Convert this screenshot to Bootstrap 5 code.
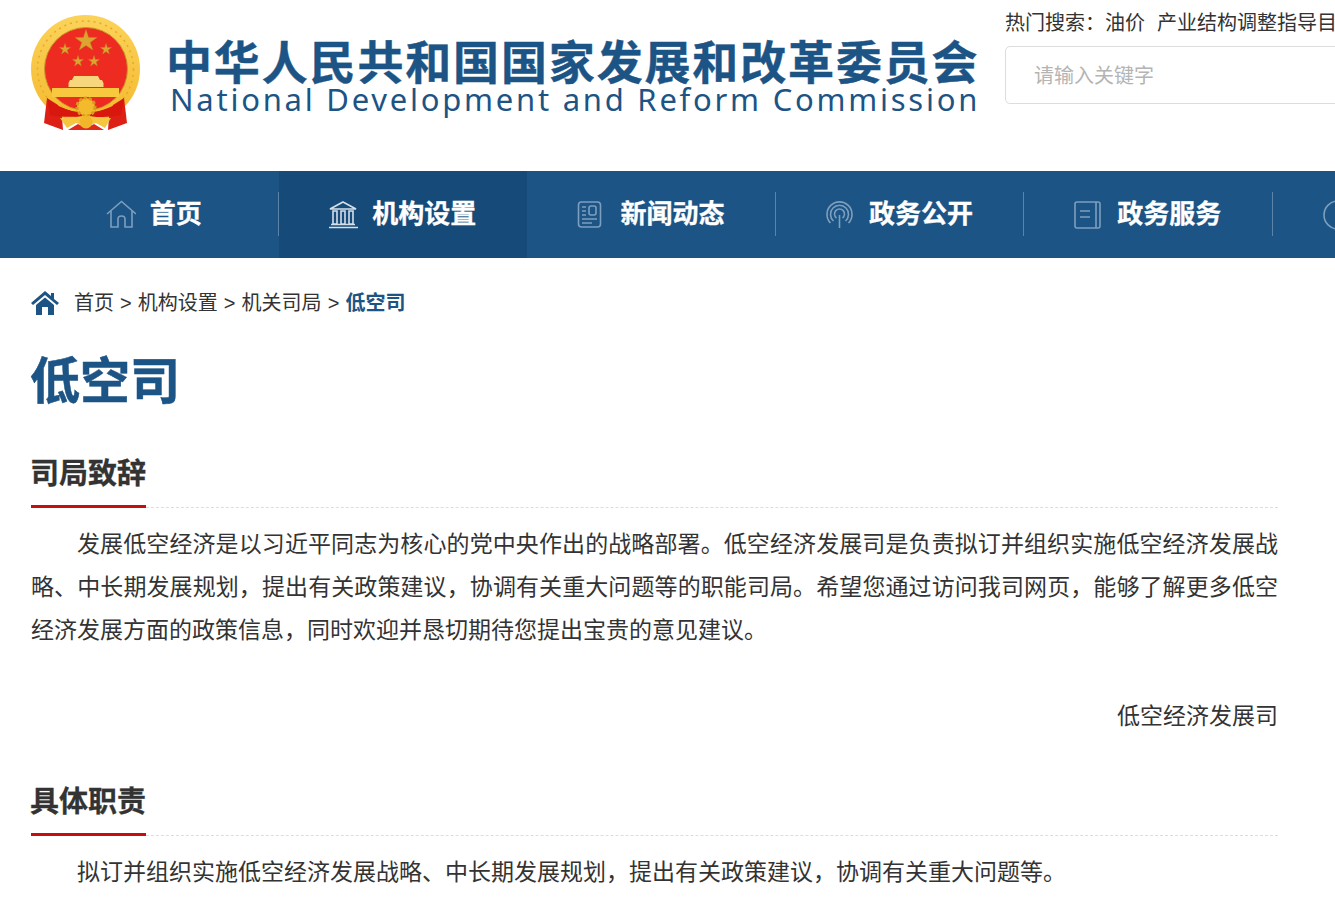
<!DOCTYPE html>
<html lang="zh-CN">
<head>
    <meta charset="UTF-8">
    <meta name="viewport" content="width=device-width, initial-scale=1.0">
    <title>低空司</title>
    <link href="https://cdn.jsdelivr.net/npm/bootstrap@5.3.0/dist/css/bootstrap.min.css" rel="stylesheet">
    <style>
        html, body {
            overflow: hidden;
            height: 908px;
        }
        body {
            font-family: "Liberation Sans", "Noto Sans CJK SC", sans-serif;
            color: #333;
            background: #fff;
        }
        .site-head {
            height: 171px;
            padding-left: 31px;
            white-space: nowrap;
        }
        .emblem {
            margin-top: 15px;
            width: 110px;
            height: 116px;
            flex: none;
        }
        .site-title {
            margin-left: 25px;
            width: 839px;
            flex: none;
            color: #1c5485;
        }
        .site-title-cn {
            font-size: 46px;
            font-weight: 700;
            letter-spacing: 1.85px;
            line-height: 44px;
            margin-top: 41px;
            -webkit-text-stroke: .4px #1c5485;
        }
        .site-title-en {
            font-family: "Noto Sans", sans-serif;
            font-size: 31px;
            letter-spacing: 2.75px;
            line-height: 26px;
            margin-top: 1px;
            margin-left: 4px;
        }
        .hot-words {
            font-size: 20px;
            line-height: 30px;
            margin-top: 8px;
        }
        .hot-words span {
            margin-right: 12px;
        }
        .search-box {
            width: 500px;
            height: 58px;
            margin-top: 8px;
            padding: 2px 0 0 28px;
            border: 1px solid #ddd;
            border-radius: 5px;
            font-size: 20px;
            color: #333;
        }
        .search-box::placeholder {
            color: #b4b4b4;
        }
        .main-nav {
            height: 87px;
            padding-left: 30.6px;
            background: #1c5485;
            white-space: nowrap;
        }
        .nav-cell {
            width: 248.4px;
            flex: none;
            position: relative;
            padding-right: 2px;
            color: #fff;
            font-size: 26px;
            font-weight: 700;
            gap: 14px;
            -webkit-text-stroke: .3px #fff;
        }
        .nav-cell::after {
            content: "";
            position: absolute;
            right: 0;
            top: 21px;
            height: 44px;
            width: 1px;
            background: rgba(255, 255, 255, .28);
        }
        .nav-cell.is-active {
            background: #164a78;
        }
        .nav-cell.is-active::after {
            display: none;
        }
        .nav-icon {
            width: 30px;
            height: 30px;
            flex: none;
            fill: none;
            stroke: #7d9fbe;
            stroke-width: 1.6;
        }
        .is-active .nav-icon {
            stroke: #d5dfe9;
        }
        .nav-cell-tail {
            justify-content: flex-start;
            padding-left: 50px;
        }
        .page-body {
            width: 1247px;
            margin-left: 31px;
        }
        .crumbs {
            padding-top: 30px;
            font-size: 20px;
            line-height: 30px;
            gap: 15px;
            word-spacing: .5px;
        }
        .crumbs b {
            color: #1c5485;
        }
        .crumb-home {
            width: 28px;
            height: 24px;
            fill: #1c5485;
            flex: none;
        }
        .page-title {
            margin: 34px 0 0 -1px;
            font-size: 50px;
            font-weight: 700;
            line-height: 60px;
            color: #1c5485;
            -webkit-text-stroke: .5px #1c5485;
        }
        .sec-head {
            border-bottom: 1px dashed #ddd;
            padding-top: 42px;
        }
        .sec-head span {
            display: inline-block;
            font-size: 29px;
            font-weight: 700;
            line-height: 40px;
            padding-bottom: 11px;
            border-bottom: 3px solid #c80d0d;
            margin-bottom: -1px;
            text-indent: -1px;
            -webkit-text-stroke: .3px #333;
        }
        .sec-text {
            margin: 14.5px 0 0;
            font-size: 23px;
            line-height: 43px;
            text-indent: 2em;
            text-align: justify;
        }
        .sec-sign {
            margin: 43px 0 2.5px;
            font-size: 23px;
            line-height: 43px;
            text-align: right;
        }
    </style>
</head>
<body>
    <header class="site-head d-flex align-items-start">
        <svg class="emblem" viewBox="31 15 110 116" aria-hidden="true">
            <defs>
                <linearGradient id="goldRing" x1="0" y1="0" x2="0" y2="1">
                    <stop offset="0" stop-color="#fbd35a"/>
                    <stop offset="1" stop-color="#f4b92e"/>
                </linearGradient>
            </defs>
            <ellipse cx="85.5" cy="69" rx="54.5" ry="54" fill="url(#goldRing)"/>
            <circle cx="85.5" cy="69" r="48" fill="none" stroke="#eaa825" stroke-width="1.5" stroke-dasharray="2 4"/>
            <circle cx="86" cy="69" r="41.5" fill="#ee2b20" stroke="#c9962a" stroke-width="1"/>
            <!-- stars -->
            <g fill="#dca431" stroke="#b88a1f" stroke-width=".4">
                <polygon points="86,29.500 88.600,37.500 97,37.500 90.200,42.500 92.800,50 86,45.500 79.200,50 81.800,42.500 75,37.500 83.400,37.500"/>
                <polygon points="65,43.500 66.300,47.500 70.500,47.500 67.100,50 68.400,54 65,51.500 61.600,54 62.900,50 59.500,47.500 63.700,47.500"/>
                <polygon points="106,43.500 107.300,47.500 111.500,47.500 108.100,50 109.400,54 106,51.500 102.600,54 103.900,50 100.500,47.500 104.700,47.500"/>
                <polygon points="78,55.500 79.300,59.500 83.500,59.500 80.100,62 81.400,66 78,63.500 74.600,66 75.900,62 72.500,59.500 76.700,59.500"/>
                <polygon points="94,55.500 95.300,59.500 99.500,59.500 96.100,62 97.400,66 94,63.500 90.600,66 91.900,62 88.500,59.500 92.700,59.500"/>
            </g>
            <!-- tiananmen -->
            <path d="M74 76 H98 L100 80 H102 L103.500 83 V87 H68.500 V83 L70 80 H72 Z" fill="#f6d77e"/>
            <rect x="52" y="88" width="67" height="9" fill="#f8c93f"/>
            <!-- ribbons and swag -->
            <path d="M47 98 L44 123 L63 130 L62 117 L58 105 Z" fill="#dd1f16"/>
            <path d="M124 98 L127 123 L108 130 L109 117 L113 105 Z" fill="#dd1f16"/>
            <path d="M47 98 C55 106 70 112 86 112 C102 112 116 106 124 98 L121 115 C108 118 96 116 86 118 C76 116 64 118 50 115 Z" fill="#d8170f"/>
            <path d="M58 103 C66 108 76 110 86 110 C96 110 105 108 113 103 L110 106 C102 111 96 112 86 112 C76 112 68 111 61 106 Z" fill="#f3bb2b"/>
            <circle cx="86" cy="107" r="9" fill="#f3bb2b" stroke="#d79b1d" stroke-width="3" stroke-dasharray="3 2"/>
            <!-- lower wheat and knot -->
            <path d="M68 130 L78 124 L86 128 L94 124 L104 130 Z" fill="#e02a1c"/>
            <path d="M60 118 C70 119 78 116 86 116 C94 116 102 119 111 118 L105 128 L96 123 L86 126 L76 123 L67 128 Z" fill="#f5c63f"/>
            <circle cx="86" cy="122" r="6.500" fill="#f2b62a"/>
        </svg>
        <div class="site-title">
            <div class="site-title-cn">中华人民共和国国家发展和改革委员会</div>
            <div class="site-title-en">National Development and Reform Commission</div>
        </div>
        <div class="flex-none">
            <div class="hot-words"><span>热门搜索：油价</span><span>产业结构调整指导目</span></div>
            <input class="search-box d-block" type="text" placeholder="请输入关键字">
        </div>
    </header>

    <nav class="main-nav d-flex">
        <div class="nav-cell d-flex align-items-center justify-content-center">
            <svg class="nav-icon" viewBox="0 0 30 30"><path d="M1 14 L15.500 1.500 L30 14 M5 11 V27 H12 V19 Q12 16 15.500 16 Q19 16 19 19 V27 H26 V11"/></svg>
            <span>首页</span>
        </div>
        <div class="nav-cell is-active d-flex align-items-center justify-content-center">
            <svg class="nav-icon" viewBox="0 0 30 30"><path d="M15 2 L28 9 H2 Z M5 11 H9 V24 H5 Z M13 11 H17 V24 H13 Z M21 11 H25 V24 H21 Z M3 24.500 H27 M1 27.500 H30"/></svg>
            <span>机构设置</span>
        </div>
        <div class="nav-cell d-flex align-items-center justify-content-center">
            <svg class="nav-icon" viewBox="0 0 30 30"><rect x="1.500" y="2" width="22" height="25" rx="3"/><path d="M5 7 H9 M5 11 H9 M5 15 H9 M5 19 H20 M5 23 H15"/><rect x="12" y="6" width="7" height="9" rx="2"/></svg>
            <span>新闻动态</span>
        </div>
        <div class="nav-cell d-flex align-items-center justify-content-center">
            <svg class="nav-icon" viewBox="0 0 30 30"><path d="M14.500 15 V28 M5.500 23 A12.500 12.500 0 1 1 23.500 23 M8.500 21 A9 9 0 1 1 20.500 21 M11.500 18 A5 5 0 1 1 17.500 18"/></svg>
            <span>政务公开</span>
        </div>
        <div class="nav-cell d-flex align-items-center justify-content-center">
            <svg class="nav-icon" viewBox="0 0 30 30"><path d="M23 2 H4 Q2 2 2 4 V26 Q2 28 4 28 H25 Q27 28 27 26 V4 Q27 2 25 2 H23 V28 M7 11 H17 M7 17 H17"/></svg>
            <span>政务服务</span>
        </div>
        <div class="nav-cell nav-cell-tail d-flex align-items-center">
            <svg class="nav-icon" viewBox="0 0 30 30"><circle cx="15" cy="15" r="14"/></svg>
        </div>
    </nav>

    <main class="page-body">
        <div class="crumbs d-flex align-items-center">
            <svg class="crumb-home" viewBox="0 0 28 24"><path d="M14 0 L20 5 V2 H23 V8 L28 12 L26 14 L14 4 L2 14 L0 12 Z M5 14 L14 6.500 L23 14 V24 H17 V16 H11 V24 H5 Z"/></svg>
            <div>首页 &gt; 机构设置 &gt; 机关司局 &gt; <b>低空司</b></div>
        </div>

        <h1 class="page-title">低空司</h1>

        <div class="sec-head"><span>司局致辞</span></div>
        <p class="sec-text">发展低空经济是以习近平同志为核心的党中央作出的战略部署。低空经济发展司是负责拟订并组织实施低空经济发展战略、中长期发展规划，提出有关政策建议，协调有关重大问题等的职能司局。希望您通过访问我司网页，能够了解更多低空经济发展方面的政策信息，同时欢迎并恳切期待您提出宝贵的意见建议。</p>
        <p class="sec-sign">低空经济发展司</p>

        <div class="sec-head"><span>具体职责</span></div>
        <p class="sec-text">拟订并组织实施低空经济发展战略、中长期发展规划，提出有关政策建议，协调有关重大问题等。</p>
    </main>

    <script src="https://cdn.jsdelivr.net/npm/bootstrap@5.3.0/dist/js/bootstrap.bundle.min.js"></script>
</body>
</html>
